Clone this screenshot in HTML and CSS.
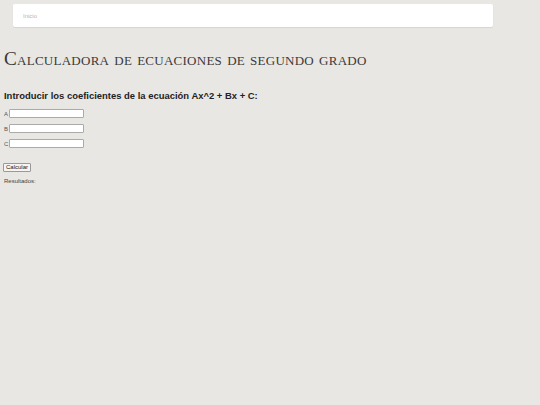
FILE: index.html
```html
<!DOCTYPE html>
<html lang="es">
<head>
<meta charset="utf-8">
<title>Calculadora</title>
<link rel="stylesheet" href="styles.css">
</head>
<body>
<nav class="topbar"><a class="nav-link" href="#">Inicio</a></nav>
<h1 class="title">Calculadora de ecuaciones de segundo grado</h1>
<h3 class="subtitle">Introducir los coeficientes de la ecuación Ax^2 + Bx + C:</h3>
<form class="coef-form">
  <div class="row"><label class="lbl">A</label><input class="field" type="text"></div>
  <div class="row"><label class="lbl">B</label><input class="field" type="text"></div>
  <div class="row"><label class="lbl">C</label><input class="field" type="text"></div>
  <div class="actions"><button class="btn" type="button">Calcular</button></div>
</form>
<p class="results">Resultados:</p>
</body>
</html>
```

FILE: styles.css
```css
html, body {
  margin: 0;
  padding: 0;
}
body {
  background: #e9e7e4;
  padding: 4px 4px 0 4px;
  font-family: "Liberation Sans", Arial, sans-serif;
  color: #333;
}
.topbar {
  margin: 0 43px 0 9px;
  height: 23px;
  background: #fff;
  border-radius: 2px;
  box-shadow: 0 1px 1px rgba(0,0,0,0.08);
  display: flex;
  align-items: center;
  padding-left: 10px;
}
.nav-link {
  font-size: 6px;
  color: #b5b5b5;
  text-decoration: none;
}
.title {
  margin: 20px 0 0 0;
  font-family: "Liberation Serif", "Times New Roman", serif;
  font-variant: small-caps;
  font-weight: normal;
  font-size: 19.2px;
  letter-spacing: 0.26px;
  line-height: 24px;
  color: #3a3a3a;
}
.subtitle {
  margin: 19px 0 0 0;
  font-size: 9.45px;
  line-height: 12px;
  font-weight: bold;
  color: #222;
}
.coef-form {
  margin-top: 7px;
}
.row {
  display: flex;
  align-items: center;
  height: 9px;
  margin-bottom: 6px;
  font-size: 6px;
  color: #555;
}
.lbl {
  width: 5px;
}
.field {
  box-sizing: border-box;
  width: 75px;
  height: 9px;
  padding: 0;
  border: 1px solid #aaa;
  border-radius: 1px;
  background: #fff;
}
.actions {
  margin-top: 7px;
}
.btn {
  font-family: "Liberation Sans", Arial, sans-serif;
  font-size: 6px;
  padding: 0 2px;
  height: 9px;
  line-height: 7px;
  border: 1px solid #999;
  border-radius: 1px;
  background: #f4f4f4;
  color: #222;
  margin-left: -1px;
}
.results {
  margin: 5px 0 0 0;
  font-size: 6px;
  color: #444;
}
```
